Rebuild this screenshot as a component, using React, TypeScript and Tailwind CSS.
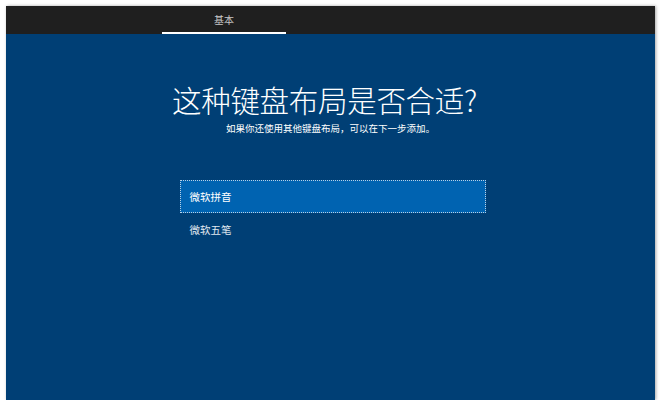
import React from 'react'

const cjk = "font-['Microsoft_YaHei','Noto_Sans_CJK_SC',sans-serif]"

export default function App() {
  const layouts = ['微软拼音', '微软五笔']
  const selected = 0

  return (
    <div className={`w-[662px] h-[400px] bg-white pt-[6px] pl-[6px] pr-[7px] ${cjk}`}>
      <div className="flex h-full flex-col shadow-[1px_0_3px_rgba(0,0,0,0.35)]">
        <div className="flex h-[28px] bg-[#1f1f1f] pl-[156px]">
          <div className="flex w-[124px] flex-col">
            <div className="flex flex-1 items-center justify-center pt-[1px] text-[10px] text-[#c8c8c8]">
              基本
            </div>
            <div className="h-[2px] bg-white" />
          </div>
        </div>

        <div className="flex flex-1 flex-col items-center bg-[#003f75] pt-[47px]">
          <h1 className="-translate-x-[6px] text-[29.5px] font-light leading-[36px] text-white tracking-[-0.3px]">
            这种键盘布局是否合适?
          </h1>
          <p className="mt-[4px] text-[9.5px] leading-[14px] text-white">
            如果你还使用其他键盘布局，可以在下一步添加。
          </p>

          <div className="mt-[45px] flex w-[306px] translate-x-[2px] flex-col">
            {layouts.map((name, i) => (
              <div
                key={name}
                className={
                  i === selected
                    ? 'flex h-[33px] items-center border border-dotted border-[#b8d0e6] bg-[#0063b1] px-[9px] text-[10.5px] text-white'
                    : 'flex h-[33px] items-center px-[10px] text-[10.5px] text-[#e0e8f0]'
                }
              >
                {name}
              </div>
            ))}
          </div>
        </div>
      </div>
    </div>
  )
}
